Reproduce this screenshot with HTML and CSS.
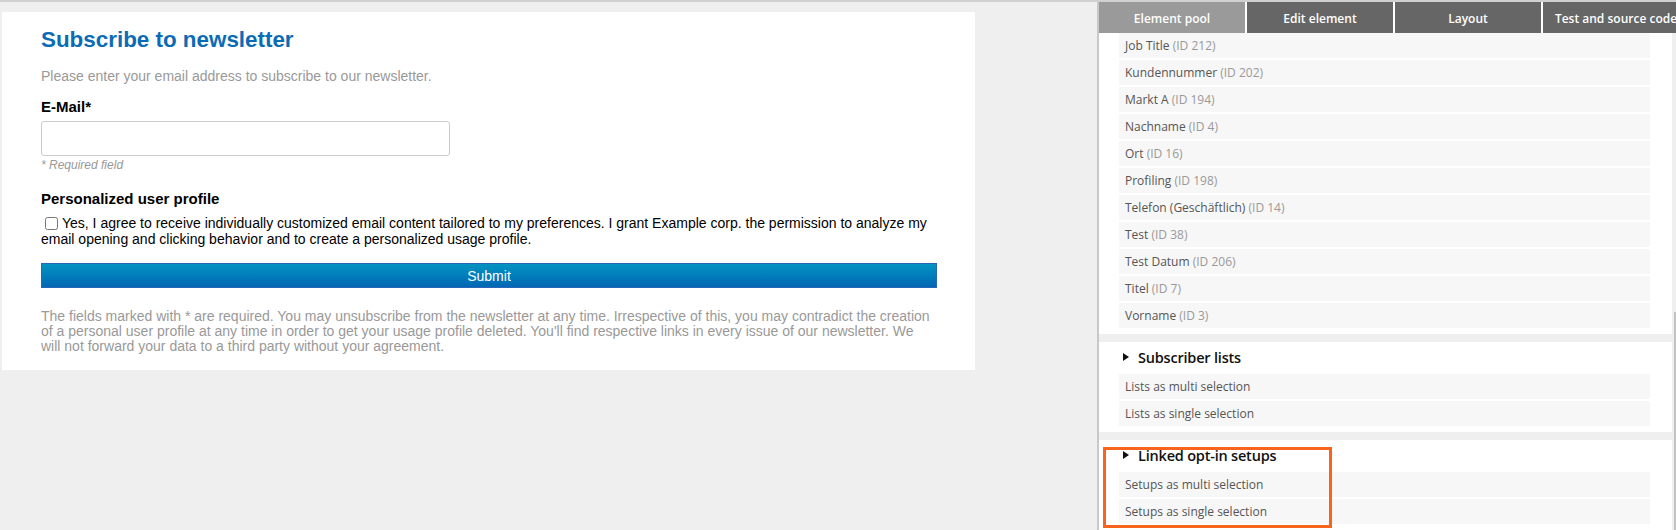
FILE: index.html
```html
<!DOCTYPE html>
<html lang="en">
<head>
<meta charset="utf-8">
<title>Form editor</title>
<link rel="stylesheet" href="styles.css">
</head>
<body>
<div class="app">
  <div class="preview">
    <div class="card">
      <h2 class="title">Subscribe to newsletter</h2>
      <p class="intro">Please enter your email address to subscribe to our newsletter.</p>
      <div class="label">E-Mail*</div>
      <input class="input" type="text">
      <p class="hint">* Required field</p>
      <div class="label label-section">Personalized user profile</div>
      <p class="consent"><input type="checkbox" class="check">Yes, I agree to receive individually customized email content tailored to my preferences. I grant Example corp. the permission to analyze my email opening and clicking behavior and to create a personalized usage profile.</p>
      <button class="submit" type="button">Submit</button>
      <p class="note">The fields marked with * are required. You may unsubscribe from the newsletter at any time. Irrespective of this, you may contradict the creation of a personal user profile at any time in order to get your usage profile deleted. You'll find respective links in every issue of our newsletter. We will not forward your data to a third party without your agreement.</p>
    </div>
  </div>
  <div class="divider"></div>
  <div class="panel">
    <div class="tabs">
      <div class="tab active">Element pool</div>
      <div class="tab">Edit element</div>
      <div class="tab">Layout</div>
      <div class="tab">Test and source code</div>
    </div>
    <div class="panel-body">
      <div class="scroll">
        <div class="group group-first">
          <div class="row">Job Title <span class="id">(ID 212)</span></div>
          <div class="row">Kundennummer <span class="id">(ID 202)</span></div>
          <div class="row">Markt A <span class="id">(ID 194)</span></div>
          <div class="row">Nachname <span class="id">(ID 4)</span></div>
          <div class="row">Ort <span class="id">(ID 16)</span></div>
          <div class="row">Profiling <span class="id">(ID 198)</span></div>
          <div class="row">Telefon (Geschäftlich) <span class="id">(ID 14)</span></div>
          <div class="row">Test <span class="id">(ID 38)</span></div>
          <div class="row">Test Datum <span class="id">(ID 206)</span></div>
          <div class="row">Titel <span class="id">(ID 7)</span></div>
          <div class="row">Vorname <span class="id">(ID 3)</span></div>
        </div>
        <div class="group">
          <div class="group-head"><span class="caret"></span>Subscriber lists</div>
          <div class="row">Lists as multi selection</div>
          <div class="row">Lists as single selection</div>
        </div>
        <div class="group">
          <div class="group-head"><span class="caret"></span>Linked opt-in setups</div>
          <div class="row">Setups as multi selection</div>
          <div class="row">Setups as single selection</div>
        </div>
      </div>
      <div class="scrollbar"><div class="thumb"></div></div>
    </div>
  </div>
</div>
<div class="highlight"></div>
</body>
</html>
```

FILE: styles.css
```css
* {
  box-sizing: border-box;
}

body {
  margin: 0;
  background: #efefef;
  font-family: "Liberation Sans", Arial, sans-serif;
  overflow: hidden;
}

.app {
  display: flex;
  height: 530px;
  border-top: 2px solid #d0d0d0;
}

/* ---------- preview ---------- */
.preview {
  flex: 0 0 1097px;
  padding: 10px 0 0 2px;
}

.card {
  width: 973px;
  height: 358px;
  background: #fff;
  padding: 15px 38px 0 39px;
}

.title {
  margin: 0;
  font-size: 22.4px;
  line-height: 25px;
  font-weight: bold;
  color: #0b6cb5;
}

.intro {
  margin: 16px 0 0;
  font-size: 14px;
  line-height: 16px;
  color: #999;
}

.label {
  margin-top: 14px;
  font-size: 15px;
  line-height: 17px;
  font-weight: bold;
  color: #000;
}

.label-section {
  margin-top: 18px;
}

.input {
  display: block;
  margin: 6px 0 0;
  width: 409px;
  height: 35px;
  border: 1px solid #ccc;
  border-radius: 3px;
  background: #fff;
}

.hint {
  margin: 2px 0 0;
  font-size: 12px;
  line-height: 14px;
  font-style: italic;
  color: #999;
}

.consent {
  margin: 8px 0 0;
  font-size: 14px;
  line-height: 16px;
  color: #000;
}

.check {
  width: 13px;
  height: 13px;
  margin: 0 4px 0 4px;
  vertical-align: -2px;
}

.submit {
  display: block;
  width: 100%;
  height: 25px;
  margin-top: 16px;
  border: 1px solid #2a66b6;
  background: linear-gradient(#0394c2, #0067b3);
  color: #fff;
  font-family: "Liberation Sans", Arial, sans-serif;
  font-size: 14px;
  padding: 0;
}

.note {
  margin: 21px 0 0;
  padding-right: 4px;
  font-size: 14px;
  line-height: 15px;
  color: #999;
}

/* ---------- divider ---------- */
.divider {
  flex: 0 0 2px;
  background: #c8c8c8;
}

/* ---------- side panel ---------- */
.panel {
  flex: 1;
  min-width: 0;
  display: flex;
  flex-direction: column;
  background: #fff;
}

.tabs {
  display: flex;
  gap: 2px;
  height: 31px;
  overflow: hidden;
  background: #fff;
}

.tab {
  flex: 0 0 146px;
  display: flex;
  align-items: center;
  justify-content: center;
  padding-top: 1px;
  white-space: nowrap;
  background: #666;
  color: #fff;
  font-family: "Open Sans", sans-serif;
  font-weight: 600;
  font-size: 12px;
}

.tab.active {
  background: #9a9a9a;
}

.panel-body {
  flex: 1;
  min-height: 0;
  display: flex;
}

.scroll {
  flex: 1;
  display: flex;
  flex-direction: column;
  gap: 8px;
  overflow: hidden;
  background: #efefef;
}

.group {
  background: #fff;
  padding: 0 22px 6px 20px;
  flex-shrink: 0;
}

.group-head {
  height: 30px;
  display: flex;
  align-items: center;
  padding-left: 4px;
  font-family: "Open Sans", sans-serif;
  font-weight: 600;
  font-size: 14.5px;
  letter-spacing: -0.2px;
  color: #111;
}

.caret {
  width: 0;
  height: 0;
  border-left: 6px solid #111;
  border-top: 4px solid transparent;
  border-bottom: 4px solid transparent;
  margin-right: 9px;
}

.row {
  height: 25px;
  padding-left: 6px;
  background: #f7f7f7;
  font-family: "Open Sans", sans-serif;
  font-size: 12px;
  line-height: 25px;
  color: #555;
  white-space: nowrap;
}

.row + .row,
.group-head + .row {
  margin-top: 2px;
}

.id {
  color: #999;
}

.scrollbar {
  flex: 0 0 4px;
  display: flex;
  flex-direction: column;
  padding-top: 279px;
  background: #efefef;
}

.thumb {
  flex: 1;
  margin-left: 2px;
  background: #c3c3c3;
}

/* annotation box */
.highlight {
  position: absolute;
  left: 1103px;
  top: 447px;
  width: 229px;
  height: 81px;
  border: 3px solid #f8641d;
}
```
